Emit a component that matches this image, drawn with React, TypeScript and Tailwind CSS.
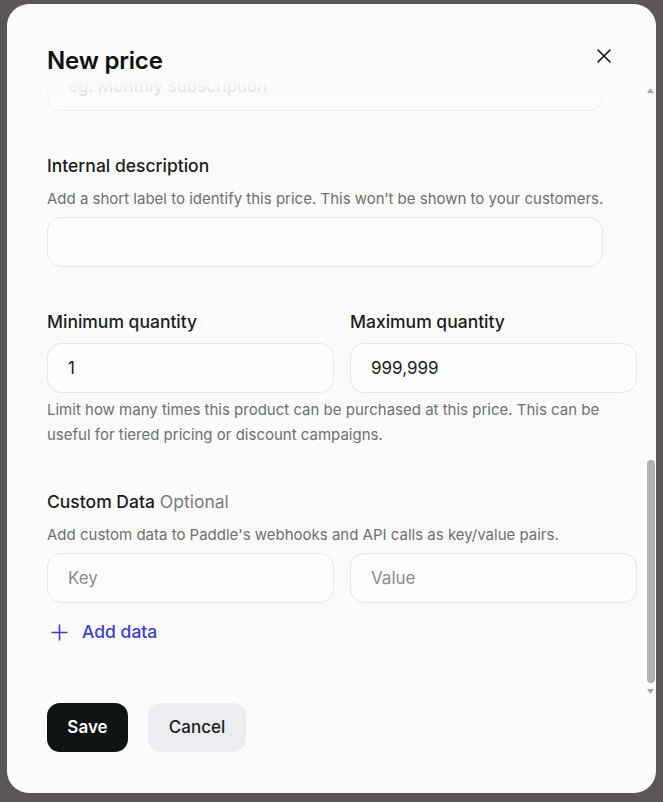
import { useLayoutEffect, useRef, useState } from "react"

type Field = {
  label: string
  optional?: boolean
  hint?: string
  placeholder?: string
  value?: string
}

// fields above the fold; the body is scrolled to the bottom on open
const TOP_FIELDS: Field[] = [
  { label: "Billing period", hint: "How often customers are charged for this price.", value: "Monthly" },
  { label: "Price name", optional: true, hint: "Shown to customers at checkout and on invoices.", placeholder: "eg. Monthly subscription" },
]

function TextInput({ placeholder, value, className = "" }: { placeholder?: string; value?: string; className?: string }) {
  const [v, setV] = useState(value ?? "")
  return (
    <input
      value={v}
      onChange={(e) => setV(e.target.value)}
      placeholder={placeholder}
      className={`h-[50px] w-full rounded-[14px] border border-[#e6e6ea] bg-[#fdfdfd] px-5 text-[17px] text-[#1c1c1e] outline-none placeholder:text-[#8b8b90] focus:border-[#b9b9c4] ${className}`}
    />
  )
}

function Label({ children, optional }: { children: React.ReactNode; optional?: boolean }) {
  return (
    <div className="text-[17.5px] leading-6 font-medium text-[#1c1c1e]">
      {children}
      {optional && <span className="font-normal text-[#7b7b80]"> Optional</span>}
    </div>
  )
}

function Hint({ children, className = "" }: { children: React.ReactNode; className?: string }) {
  return <p className={`text-[15px] leading-6 text-[#6f6f74] ${className}`}>{children}</p>
}

export default function App() {
  const bodyRef = useRef<HTMLDivElement>(null)
  const [rows, setRows] = useState([0])

  useLayoutEffect(() => {
    const el = bodyRef.current
    if (el) el.scrollTop = el.scrollHeight
  }, [])

  return (
    <div className="min-h-screen bg-[#5b5756] px-[7px] pt-[4px] pb-[9px] font-['Inter','Noto_Sans',sans-serif]">
      <div className="relative flex h-[789px] w-[649px] flex-col overflow-hidden rounded-[22px] bg-[#fbfbfb]">
        <div className="flex items-start justify-between pt-[41px] pr-[41px] pb-[5px] pl-10">
          <h2 className="text-[24px] leading-8 font-semibold tracking-[-0.2px] text-[#0d1111]">New price</h2>
          <button className="flex h-[22px] w-[22px] cursor-pointer items-center justify-center text-[#151515]">
            <svg width="14" height="14" viewBox="0 0 14 14" fill="none" stroke="currentColor" strokeWidth="1.6" strokeLinecap="round">
              <path d="M1 1l12 12M13 1L1 13" />
            </svg>
          </button>
        </div>

        <div className="relative min-h-0 flex-1">
          <div ref={bodyRef} className="h-full overflow-y-auto pr-[19px] pb-[53px] pl-10 [scrollbar-width:none]">
            <div className="w-[590px] pt-6">
              {TOP_FIELDS.map((f, i) => (
                <div key={f.label} className={i === 0 ? "" : "mt-[43px]"}>
                  <Label optional={f.optional}>{f.label}</Label>
                  <Hint className="mt-[9px]">{f.hint}</Hint>
                  <TextInput className="mt-[6px] !w-[556px]" placeholder={f.placeholder} value={f.value} />
                </div>
              ))}

              <div className="mt-[43px]">
                <Label>Internal description</Label>
                <Hint className="mt-[9px] whitespace-nowrap">Add a short label to identify this price. This won’t be shown to your customers.</Hint>
                <TextInput className="mt-[6px] !w-[556px]" />
              </div>
            </div>

            <div className="mt-[43px] grid w-[590px] grid-cols-2 gap-x-4">
              <div>
                <Label>Minimum quantity</Label>
                <TextInput className="mt-[9px]" value="1" />
              </div>
              <div>
                <Label>Maximum quantity</Label>
                <TextInput className="mt-[9px]" value="999,999" />
              </div>
            </div>
            <Hint className="mt-[4px] w-[560px] leading-[25px]">
              Limit how many times this product can be purchased at this price. This can be useful for tiered pricing or discount campaigns.
            </Hint>

            <div className="mt-[43px] w-[590px]">
              <Label optional>Custom Data</Label>
              <Hint className="mt-[9px]">Add custom data to Paddle's webhooks and API calls as key/value pairs.</Hint>
              <div className="mt-[6px] flex flex-col gap-3">
                {rows.map((r) => (
                  <div key={r} className="grid grid-cols-2 gap-x-4">
                    <TextInput placeholder="Key" />
                    <TextInput placeholder="Value" />
                  </div>
                ))}
              </div>
              <button
                onClick={() => setRows([...rows, rows.length])}
                className="mt-[17px] flex cursor-pointer items-center gap-[14px] pl-1 text-[17.5px] leading-6 font-medium text-[#3d3dcc]"
              >
                <svg width="17" height="17" viewBox="0 0 17 17" fill="none" stroke="currentColor" strokeWidth="1.6">
                  <path d="M8.5 0.5v16M0.5 8.5h16" />
                </svg>
                Add data
              </button>
            </div>
          </div>

          {/* fades at the scroll edges */}
          <div className="pointer-events-none absolute inset-x-0 top-0 h-[38px] bg-gradient-to-b from-[#fbfbfb] to-[#fbfbfb]/0" />
          <div className="pointer-events-none absolute inset-x-0 bottom-0 h-[40px] bg-gradient-to-t from-[#fbfbfb] to-[#fbfbfb]/0" />

          {/* scrollbar */}
          <div className="pointer-events-none absolute top-0 right-[1px] bottom-0 flex w-[9px] flex-col items-center">
            <svg className="mt-[6px]" width="7" height="5" viewBox="0 0 7 5">
              <path d="M3.5 0L7 5H0z" fill="#a9a9ae" />
            </svg>
            <div className="flex-1" />
            <div className="h-[223px] w-[8px] rounded-full bg-[#b1b1b6]" />
            <svg className="mt-[6px] mb-[3px]" width="7" height="5" viewBox="0 0 7 5">
              <path d="M0 0H7L3.5 5z" fill="#a9a9ae" />
            </svg>
          </div>
        </div>

        <div className="flex gap-5 pt-[6px] pb-[41px] pl-10">
          <button className="h-[49px] w-[81px] cursor-pointer rounded-[13px] bg-[#0e1414] text-[17px] font-semibold text-white">Save</button>
          <button className="h-[49px] w-[98px] cursor-pointer rounded-[13px] bg-[#ecedf1] text-[17px] font-medium text-[#1c1c1e]">Cancel</button>
        </div>
      </div>
    </div>
  )
}
